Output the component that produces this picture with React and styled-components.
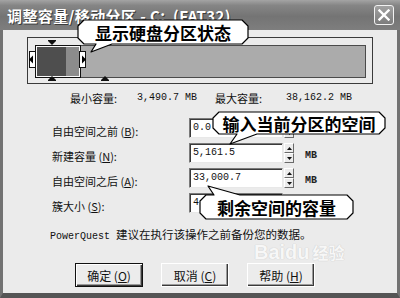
import React from "react";
import styled, { createGlobalStyle } from "styled-components";

const CJK = `"Noto Sans CJK SC", "Noto Sans", sans-serif`;
const MONO = `"Liberation Mono", "DejaVu Sans Mono", monospace`;

const GlobalStyle = createGlobalStyle`
  html, body { margin: 0; padding: 0; background: #ebebeb; }
  body { width: 400px; height: 298px; overflow: hidden; font-family: ${CJK}; }
  * { box-sizing: border-box; }
`;

const Window = styled.div`
  position: relative;
  width: 400px;
  height: 298px;
  display: flex;
  flex-direction: column;
  overflow: hidden;
  background: #ebebeb;
`;

const TitleBar = styled.div`
  height: 30px;
  flex: 0 0 30px;
  display: flex;
  align-items: center;
  justify-content: space-between;
  padding: 0 6px 0 7px;
  background: linear-gradient(#a4a4a4 0%, #858585 18%, #747474 55%, #7e7e7e 100%);
`;

const Title = styled.div`
  color: #fff;
  font-family: ${CJK};
  font-size: 15px;
  font-weight: 700;
  letter-spacing: 0.4px;
  line-height: 1;
  white-space: pre;
  text-shadow: 1px 1px 0 #3c3c3c;
`;

const CloseButton = styled.div`
  width: 20px;
  height: 20px;
  margin-top: -1px;
  border: 1px solid #f2f2f2;
  border-radius: 3px;
  background: linear-gradient(#a2a2a2, #7c7c7c);
  display: flex;
  align-items: center;
  justify-content: center;
`;

const Body = styled.div`
  flex: 1;
  display: flex;
  flex-direction: column;
  padding-top: 7px;
  border-left: 3px solid #727272;
  border-right: 3px solid #727272;
  border-bottom: 5px solid #555;
  background: #ebebeb;
`;

const MapFrame = styled.div`
  position: relative;
  margin-left: 24px;
  width: 346px;
  height: 47px;
  border: 1px solid #3a3a3a;
  padding: 7px 6px 5px 7px;
`;

const Bar = styled.div`
  height: 100%;
  display: flex;
  background: #ababab;
  border: 1px solid #4a4a4a;
`;

const Part = styled.div`
  width: 44px;
  display: flex;
  border: 1px solid #fafafa;
  box-shadow: 0 0 0 1px #111;
`;

const Used = styled.div`
  flex: 0 0 29px;
  background: #4e4e4e;
`;

const Slack = styled.div`
  flex: 1;
  background: #8c8c8c;
`;

const Handle = styled.svg`
  position: absolute;
  top: 13px;
  left: ${(p) => p.$left}px;
`;

const Marker = styled.svg`
  position: absolute;
  top: ${(p) => p.$top}px;
  left: ${(p) => p.$left}px;
`;

const Stats = styled.div`
  margin-top: 6px;
  margin-left: 67px;
  height: 16px;
  display: grid;
  grid-template-columns: 67px 78px 71px auto;
  align-items: center;
  line-height: 16px;
`;

const StatLabel = styled.span`
  font-family: ${CJK};
  font-size: 11px;
  color: #111;
`;

const StatValue = styled.span`
  font-family: ${MONO};
  font-size: 10px;
  color: #111;
  white-space: pre;
`;

const Form = styled.div`
  margin-top: 12px;
  margin-left: 49px;
  display: flex;
  flex-direction: column;
  gap: 5px;
`;

const Row = styled.div`
  display: grid;
  grid-template-columns: 137px 94px 11px auto;
  height: 20px;
`;

const Label = styled.div`
  font-family: ${CJK};
  font-size: 11px;
  line-height: 20px;
  padding-top: 3px;
  color: #111;
  white-space: pre;
  u { text-decoration: underline; text-underline-offset: 1px; }
`;

const Input = styled.div`
  height: 20px;
  background: #fff;
  border-top: 1px solid #7a7a7a;
  border-left: 1px solid #7a7a7a;
  border-right: 1px solid #e8e8e8;
  border-bottom: 1px solid #e8e8e8;
  box-shadow: inset 1px 1px 0 #3a3a3a;
  padding-left: 3px;
  font-family: ${MONO};
  font-size: 10px;
  line-height: 18px;
  color: #111;
`;

const Spinner = styled.div`
  margin-left: 1px;
  width: 10px;
  height: 20px;
  display: flex;
  flex-direction: column;
`;

const SpinHalf = styled.div`
  flex: 1;
  display: flex;
  align-items: center;
  justify-content: center;
  background: #ececec;
  border-top: 1px solid #fff;
  border-left: 1px solid #fff;
  border-right: 1px solid #6a6a6a;
  border-bottom: 1px solid #6a6a6a;
`;

const Unit = styled.div`
  padding-left: 11px;
  padding-top: 3px;
  font-family: ${MONO};
  font-size: 10px;
  font-weight: 700;
  line-height: 20px;
  color: #222;
`;

const Note = styled.div`
  margin-top: 11px;
  margin-left: 47px;
  height: 16px;
  line-height: 16px;
  white-space: pre;
  color: #111;
`;

const NoteMono = styled.span`
  font-family: ${MONO};
  font-size: 10px;
`;

const NoteText = styled.span`
  font-family: ${CJK};
  font-size: 11.5px;
`;

const Buttons = styled.div`
  margin-top: 23px;
  margin-left: 72px;
  display: flex;
  gap: 18px;
`;

const Button = styled.div`
  width: 68px;
  height: 24px;
  display: flex;
  align-items: center;
  justify-content: center;
  background: #ececec;
  font-family: ${CJK};
  font-size: 12px;
  color: #111;
  white-space: pre;
  border: 1px solid ${(p) => (p.$default ? "#111" : "#fff")};
  box-shadow: ${(p) =>
    p.$default
      ? "inset 1px 1px 0 #fff, inset -1px -1px 0 #3a3a3a, inset -2px -2px 0 #9a9a9a"
      : "inset -1px -1px 0 #3a3a3a, inset -2px -2px 0 #9a9a9a"};
  u { text-decoration: underline; text-underline-offset: 1px; }
`;

const Watermark = styled.div`
  position: absolute;
  left: 254px;
  top: 242px;
  display: flex;
  align-items: baseline;
  gap: 3px;
  color: #f7f7f7;
  font-family: "Liberation Sans", sans-serif;
  font-weight: 700;
  font-size: 20px;
  line-height: 1;
  text-shadow: 0 0 1px #cdcdcd, 0 0 1px #cdcdcd;
  pointer-events: none;
`;

const WatermarkCJK = styled.span`
  font-family: ${CJK};
  font-size: 16px;
`;

const CalloutBox = styled.div`
  position: absolute;
  left: ${(p) => p.$x}px;
  top: ${(p) => p.$y}px;
  width: ${(p) => p.$w}px;
  height: ${(p) => p.$h}px;
  display: flex;
  align-items: center;
  justify-content: center;
`;

const CalloutShape = styled.svg`
  position: absolute;
  left: 0;
  top: 0;
  overflow: visible;
`;

const CalloutText = styled.span`
  position: relative;
  font-family: ${CJK};
  font-size: 17px;
  font-weight: 700;
  line-height: 1;
  color: #000;
  white-space: pre;
`;

function Callout({ x, y, w, h, tail, text }) {
  const c = 6;
  const { side, b1, b2, tx, ty } = tail;
  let d;
  if (side === "bottom") {
    d = `M${c} 0 H${w - c} L${w} ${c} V${h - c} L${w - c} ${h} H${b2} L${tx} ${ty} L${b1} ${h} H${c} L0 ${h - c} V${c} Z`;
  } else {
    d = `M${c} 0 H${b1} L${tx} ${ty} L${b2} 0 H${w - c} L${w} ${c} V${h - c} L${w - c} ${h} H${c} L0 ${h - c} V${c} Z`;
  }
  return (
    <CalloutBox $x={x} $y={y} $w={w} $h={h}>
      <CalloutShape width={w} height={h} viewBox={`0 0 ${w} ${h}`}>
        <path d={d} fill="#fff" stroke="#000" strokeWidth="1.2" strokeLinejoin="round" />
      </CalloutShape>
      <CalloutText>{text}</CalloutText>
    </CalloutBox>
  );
}

function Spin() {
  return (
    <Spinner>
      <SpinHalf>
        <svg width="5" height="3" viewBox="0 0 5 3"><path d="M2.5 0 L5 3 H0 Z" fill="#111" /></svg>
      </SpinHalf>
      <SpinHalf>
        <svg width="5" height="3" viewBox="0 0 5 3"><path d="M0 0 H5 L2.5 3 Z" fill="#111" /></svg>
      </SpinHalf>
    </Spinner>
  );
}

const rows = [
  { label: "自由空间之前 ", key: "B", value: "0.0", spin: true, unit: "" },
  { label: "新建容量 ", key: "N", value: "5,161.5", spin: true, unit: "MB" },
  { label: "自由空间之后 ", key: "A", value: "33,000.7", spin: true, unit: "MB" },
  { label: "簇大小 ", key: "S", value: "4", spin: false, unit: "" },
];

export default function App() {
  return (
    <>
      <GlobalStyle />
      <Window>
        <TitleBar>
          <Title>调整容量/移动分区 - C:  (FAT32)</Title>
          <CloseButton>
            <svg width="12" height="12" viewBox="0 0 12 12">
              <path d="M1.5 1.5 L10.5 10.5 M10.5 1.5 L1.5 10.5" stroke="#fff" strokeWidth="2.4" strokeLinecap="square" />
            </svg>
          </CloseButton>
        </TitleBar>
        <Body>
          <MapFrame>
            <Bar>
              <Part>
                <Used />
                <Slack />
              </Part>
            </Bar>
            <Handle $left={1} width="7" height="17" viewBox="0 0 7 17">
              <rect x="0.5" y="0.5" width="6" height="16" fill="#fff" stroke="#111" />
              <path d="M0 8.5 L4 4.5 V12.5 Z" fill="#000" />
            </Handle>
            <Handle $left={51} width="7" height="17" viewBox="0 0 7 17">
              <rect x="0.5" y="0.5" width="6" height="16" fill="#fff" stroke="#111" />
              <path d="M7 8.5 L3 4.5 V12.5 Z" fill="#000" />
            </Handle>
            <Marker $left={20} $top={2} width="8" height="5" viewBox="0 0 8 5">
              <path d="M0 0 H8 V1 L4 5 L0 1 Z" fill="#111" />
            </Marker>
            <Marker $left={20} $top={38} width="8" height="5" viewBox="0 0 8 5">
              <path d="M4 0 L8 4 V5 H0 V4 Z" fill="#111" />
            </Marker>
            <Marker $left={73} $top={38} width="8" height="5" viewBox="0 0 8 5">
              <path d="M4 0 L8 4 V5 H0 V4 Z" fill="#111" />
            </Marker>
          </MapFrame>

          <Stats>
            <StatLabel>最小容量:</StatLabel>
            <StatValue>3,490.7 MB</StatValue>
            <StatLabel>最大容量:</StatLabel>
            <StatValue>38,162.2 MB</StatValue>
          </Stats>

          <Form>
            {rows.map((r) => (
              <Row key={r.key}>
                <Label>
                  {r.label}(<u>{r.key}</u>):
                </Label>
                <Input>{r.value}</Input>
                {r.spin ? <Spin /> : <span />}
                <Unit>{r.unit}</Unit>
              </Row>
            ))}
          </Form>

          <Note>
            <NoteMono>PowerQuest </NoteMono>
            <NoteText>建议在执行该操作之前备份您的数据。</NoteText>
          </Note>

          <Buttons>
            <Button $default>
              确定 (<u>O</u>)
            </Button>
            <Button>
              取消 (<u>C</u>)
            </Button>
            <Button>
              帮助 (<u>H</u>)
            </Button>
          </Buttons>
        </Body>

        <Watermark>
          Baidu<WatermarkCJK>经验</WatermarkCJK>
        </Watermark>

        <Callout
          x={78}
          y={20}
          w={170}
          h={24}
          text="显示硬盘分区状态"
          tail={{ side: "bottom", b1: 18, b2: 34, tx: 13, ty: 32 }}
        />
        <Callout
          x={213}
          y={112}
          w={172}
          h={22}
          text="输入当前分区的空间"
          tail={{ side: "bottom", b1: 24, b2: 44, tx: 17, ty: 32 }}
        />
        <Callout
          x={200}
          y={195}
          w={153}
          h={24}
          text="剩余空间的容量"
          tail={{ side: "top", b1: 14, b2: 40, tx: 8, ty: -9 }}
        />
      </Window>
    </>
  );
}
